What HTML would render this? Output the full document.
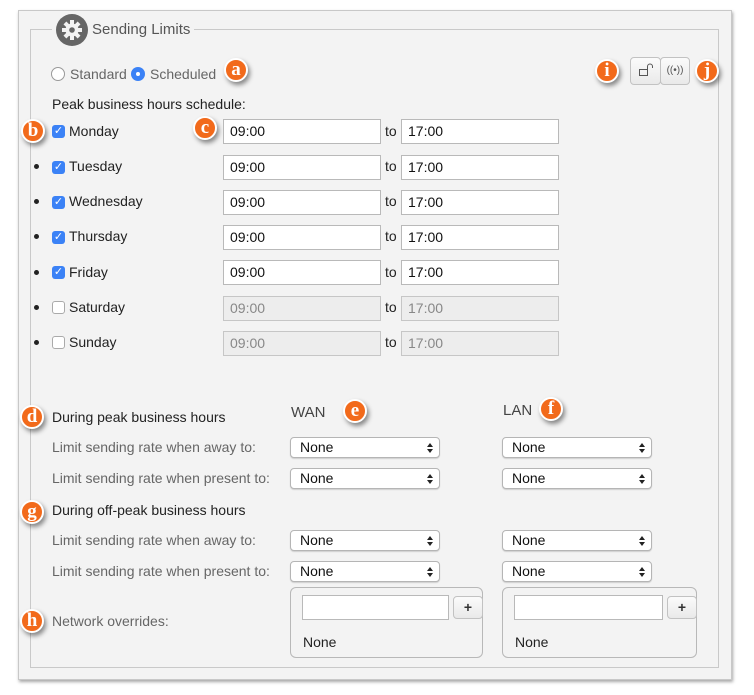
<!DOCTYPE html>
<html><head><meta charset="utf-8"><style>
*{box-sizing:border-box}
body{margin:0;width:754px;height:695px;background:#fff;font-family:"Liberation Sans",Arial,sans-serif;font-size:14px;color:#222;position:relative;overflow:hidden}
.abs{position:absolute}
#panel{left:18px;top:10px;width:714px;height:670px;background:#f3f3f3;border:1px solid #c8c8c8;box-shadow:1px 2px 3px rgba(0,0,0,.35)}
#fs{left:30px;top:29px;width:689px;height:639px;border:1px solid #c9c9c9}
.badge{position:absolute;width:24px;height:24px;border-radius:50%;background:#f26a1b;border:2px solid #fff;box-shadow:2px 3px 5px rgba(0,0,0,.45);color:#fff;font-family:"Liberation Serif",serif;font-weight:bold;font-size:19px;line-height:19px;text-align:center}
.t{position:absolute;white-space:nowrap;line-height:16px}
.inp{position:absolute;height:25px;background:#fff;border:1px solid #b9b9b9;font-size:14px;padding-left:6px;line-height:23px;color:#111}
.dis{background:#ededed;color:#888;border-color:#c6c6c6}
.cb{position:absolute;width:13px;height:13px;border-radius:3px;background:#3b82f6;color:#fff;font-size:11px;line-height:13px;text-align:center}
.cbo{position:absolute;width:13px;height:13px;border-radius:3px;background:#fff;border:1px solid #aaa}
.dot{position:absolute;width:5px;height:5px;border-radius:50%;background:#222}
.sel{position:absolute;height:21px;width:150px;background:#fff;border:1px solid #b5b5b5;border-radius:4px;box-shadow:0 1px 1px rgba(0,0,0,.15);padding-left:9px;line-height:19px;font-size:14px;color:#111}
.sel:after{content:"";position:absolute;right:6px;top:5px;border-left:3px solid transparent;border-right:3px solid transparent;border-bottom:4px solid #222}
.sel:before{content:"";position:absolute;right:6px;top:11px;border-left:3px solid transparent;border-right:3px solid transparent;border-top:4px solid #222}
.gray{color:#666}
.box{position:absolute;border:1px solid #b8b8b8;border-radius:6px;background:#f3f3f3}
.btn{position:absolute;background:linear-gradient(#fbfbfb,#e9e9e9);border:1px solid #c2c2c2;border-radius:4px;text-align:center;color:#333}
</style></head><body>
<div id="panel" class="abs"></div>
<div id="fs" class="abs"></div>
<div class="abs" style="left:52px;top:12px;width:142px;height:34px;background:#f3f3f3"></div>
<svg class="abs" style="left:56px;top:14px" width="32" height="32" viewBox="0 0 32 32">
<circle cx="16" cy="16" r="16" fill="#666"/>
<g fill="#f3f3f3" transform="translate(16 16)">
<circle r="6.5"/>
<rect x="-2" y="-10" width="4" height="20"/>
<rect x="-2" y="-10" width="4" height="20" transform="rotate(45)"/>
<rect x="-2" y="-10" width="4" height="20" transform="rotate(90)"/>
<rect x="-2" y="-10" width="4" height="20" transform="rotate(135)"/>
<circle r="2.8" fill="#666"/>
</g></svg>
<div class="t gray" style="left:92px;top:22px;font-size:15px;color:#555">Sending Limits</div>

<div class="abs" style="left:51px;top:67px;width:14px;height:14px;border-radius:50%;border:1px solid #999;background:#fff"></div>
<div class="t gray" style="left:70px;top:66px">Standard</div>
<div class="abs" style="left:131px;top:67px;width:14px;height:14px;border-radius:50%;background:#3b82f6"></div>
<div class="abs" style="left:136px;top:72px;width:4px;height:4px;border-radius:50%;background:#fff"></div>
<div class="t gray" style="left:150px;top:66px">Scheduled</div>
<div class="badge" style="left:224px;top:58px">a</div>

<div class="btn" style="left:630px;top:57px;width:31px;height:28px"></div>
<svg class="abs" style="left:638px;top:63px" width="16" height="14" viewBox="0 0 16 14"><rect x="1.5" y="6.5" width="8" height="6" fill="none" stroke="#555"/><path d="M9.5 6.5V3.5a2.5 2.5 0 0 1 5 0V5" fill="none" stroke="#555"/></svg>
<div class="btn" style="left:660px;top:57px;width:30px;height:28px;font-size:10px;line-height:26px;color:#555">((•))</div>
<div class="badge" style="left:595px;top:59px">i</div>
<div class="badge" style="left:695px;top:59px">j</div>

<div class="t" style="left:52px;top:96px">Peak business hours schedule:</div>
<div class="badge" style="left:21px;top:119px">b</div>
<div class="badge" style="left:193px;top:116px">c</div>

<div class="cb" style="left:52px;top:125px">✓</div><div class="t" style="left:69px;top:123px">Monday</div>
<div class="inp" style="left:223px;top:119px;width:158px">09:00</div><div class="t" style="left:385px;top:123px">to</div><div class="inp" style="left:401px;top:119px;width:158px">17:00</div>

<div class="dot" style="left:34px;top:164px"></div><div class="cb" style="left:52px;top:161px">✓</div><div class="t" style="left:69px;top:158px">Tuesday</div>
<div class="inp" style="left:223px;top:155px;width:158px">09:00</div><div class="t" style="left:385px;top:158px">to</div><div class="inp" style="left:401px;top:155px;width:158px">17:00</div>

<div class="dot" style="left:34px;top:199px"></div><div class="cb" style="left:52px;top:196px">✓</div><div class="t" style="left:69px;top:193px">Wednesday</div>
<div class="inp" style="left:223px;top:190px;width:158px">09:00</div><div class="t" style="left:385px;top:193px">to</div><div class="inp" style="left:401px;top:190px;width:158px">17:00</div>

<div class="dot" style="left:34px;top:234px"></div><div class="cb" style="left:52px;top:231px">✓</div><div class="t" style="left:69px;top:228px">Thursday</div>
<div class="inp" style="left:223px;top:225px;width:158px">09:00</div><div class="t" style="left:385px;top:228px">to</div><div class="inp" style="left:401px;top:225px;width:158px">17:00</div>

<div class="dot" style="left:34px;top:270px"></div><div class="cb" style="left:52px;top:266px">✓</div><div class="t" style="left:69px;top:264px">Friday</div>
<div class="inp" style="left:223px;top:260px;width:158px">09:00</div><div class="t" style="left:385px;top:264px">to</div><div class="inp" style="left:401px;top:260px;width:158px">17:00</div>

<div class="dot" style="left:34px;top:305px"></div><div class="cbo" style="left:52px;top:301px"></div><div class="t" style="left:69px;top:299px">Saturday</div>
<div class="inp dis" style="left:223px;top:296px;width:158px">09:00</div><div class="t" style="left:385px;top:299px">to</div><div class="inp dis" style="left:401px;top:296px;width:158px">17:00</div>

<div class="dot" style="left:34px;top:340px"></div><div class="cbo" style="left:52px;top:336px"></div><div class="t" style="left:69px;top:334px">Sunday</div>
<div class="inp dis" style="left:223px;top:331px;width:158px">09:00</div><div class="t" style="left:385px;top:334px">to</div><div class="inp dis" style="left:401px;top:331px;width:158px">17:00</div>

<div class="badge" style="left:20px;top:405px">d</div>
<div class="t" style="left:52px;top:409px">During peak business hours</div>
<div class="t gray" style="left:291px;top:405px;font-size:15px;color:#444">WAN</div>
<div class="badge" style="left:343px;top:399px">e</div>
<div class="t gray" style="left:503px;top:403px;font-size:15px;color:#444">LAN</div>
<div class="badge" style="left:539px;top:397px">f</div>

<div class="t gray" style="left:52px;top:439px">Limit sending rate when away to:</div>
<div class="sel" style="left:290px;top:437px">None</div><div class="sel" style="left:502px;top:437px">None</div>
<div class="t gray" style="left:52px;top:470px">Limit sending rate when present to:</div>
<div class="sel" style="left:290px;top:468px">None</div><div class="sel" style="left:502px;top:468px">None</div>

<div class="badge" style="left:20px;top:500px">g</div>
<div class="t" style="left:52px;top:502px">During off-peak business hours</div>
<div class="t gray" style="left:52px;top:532px">Limit sending rate when away to:</div>
<div class="sel" style="left:290px;top:530px">None</div><div class="sel" style="left:502px;top:530px">None</div>
<div class="t gray" style="left:52px;top:563px">Limit sending rate when present to:</div>
<div class="sel" style="left:290px;top:561px">None</div><div class="sel" style="left:502px;top:561px">None</div>

<div class="badge" style="left:20px;top:609px">h</div>
<div class="t gray" style="left:52px;top:613px">Network overrides:</div>

<div class="box" style="left:290px;top:587px;width:193px;height:71px"></div>
<div class="inp" style="left:302px;top:595px;width:147px;height:25px"></div>
<div class="btn" style="left:453px;top:596px;width:30px;height:23px;font-size:14px;line-height:20px;font-weight:bold">+</div>
<div class="t" style="left:303px;top:634px">None</div>

<div class="box" style="left:502px;top:587px;width:195px;height:71px"></div>
<div class="inp" style="left:514px;top:595px;width:149px;height:25px"></div>
<div class="btn" style="left:667px;top:596px;width:30px;height:23px;font-size:14px;line-height:20px;font-weight:bold">+</div>
<div class="t" style="left:515px;top:634px">None</div>
</body></html>
